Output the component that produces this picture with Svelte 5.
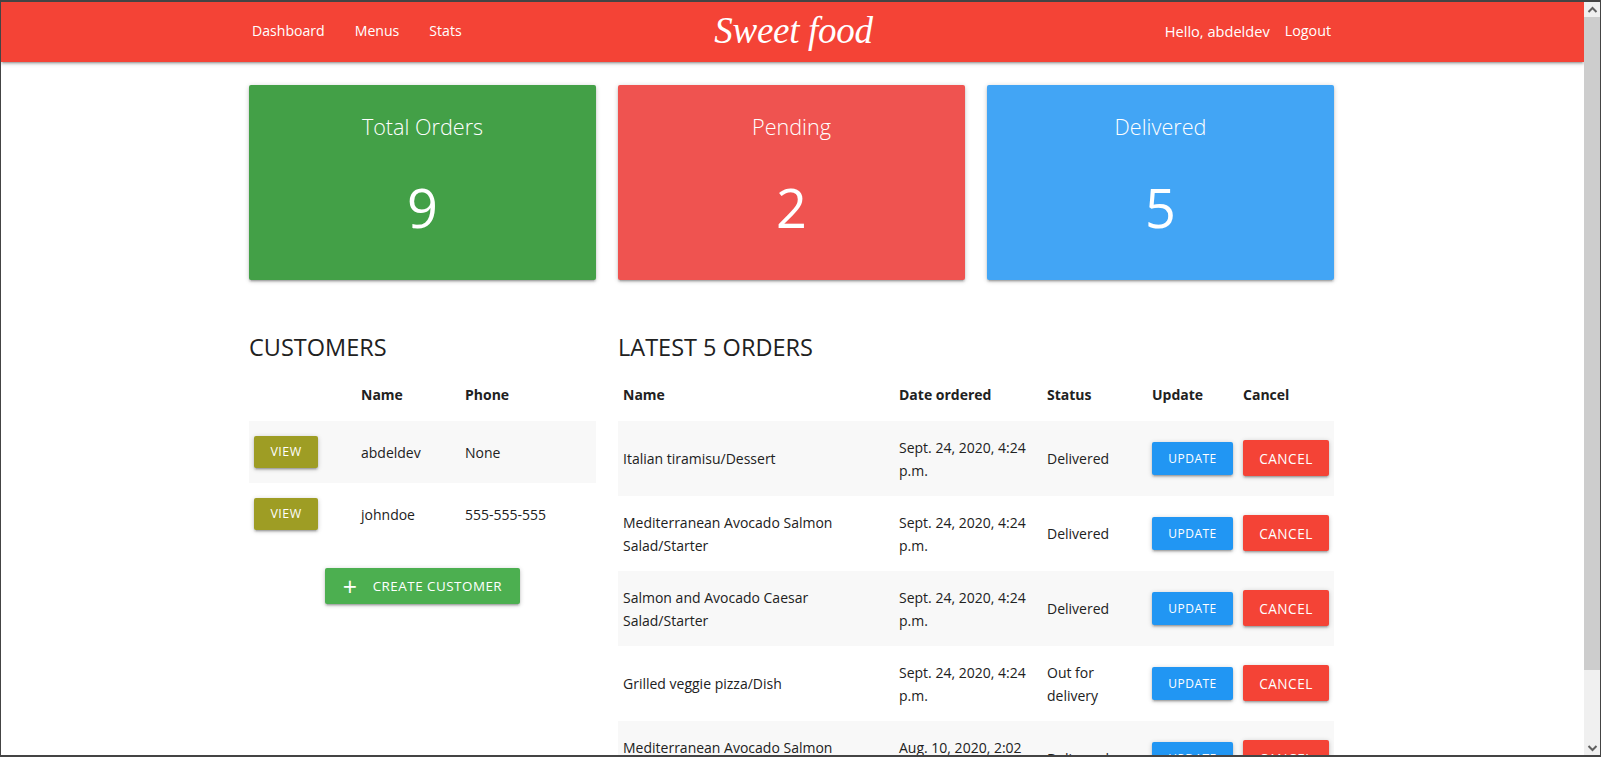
<script>
  const customers = [
    { name: 'abdeldev', phone: 'None' },
    { name: 'johndoe', phone: '555-555-555' }
  ];
  const orders = [
    { name: 'Italian tiramisu/Dessert', date: 'Sept. 24, 2020, 4:24 p.m.', status: 'Delivered' },
    { name: 'Mediterranean Avocado Salmon Salad/Starter', date: 'Sept. 24, 2020, 4:24 p.m.', status: 'Delivered' },
    { name: 'Salmon and Avocado Caesar Salad/Starter', date: 'Sept. 24, 2020, 4:24 p.m.', status: 'Delivered' },
    { name: 'Grilled veggie pizza/Dish', date: 'Sept. 24, 2020, 4:24 p.m.', status: 'Out for delivery' },
    { name: 'Mediterranean Avocado Salmon Salad/Starter', date: 'Aug. 10, 2020, 2:02 p.m.', status: 'Delivered' }
  ];
  const stats = [
    { title: 'Total Orders', value: 9, color: 'green' },
    { title: 'Pending', value: 2, color: 'red' },
    { title: 'Delivered', value: 5, color: 'blue' }
  ];
</script>

<div class="window">
  <div class="page">
    <nav>
      <div class="nav-inner">
        <ul class="links">
          <li>Dashboard</li>
          <li>Menus</li>
          <li>Stats</li>
        </ul>
        <div class="logo">Sweet food</div>
        <ul class="user">
          <li class="hello">Hello, abdeldev</li>
          <li>Logout</li>
        </ul>
      </div>
    </nav>

    <main>
      <section class="cards">
        {#each stats as s}
          <div class="card {s.color}">
            <h3>{s.title}</h3>
            <div class="num">{s.value}</div>
          </div>
        {/each}
      </section>

      <section class="lower">
        <div>
          <h2>CUSTOMERS</h2>
          <table class="cust">
            <colgroup><col style="width:107px" /><col style="width:104px" /><col /></colgroup>
            <thead>
              <tr><th></th><th>Name</th><th>Phone</th></tr>
            </thead>
            <tbody>
              {#each customers as c}
                <tr>
                  <td class="action"><button class="btn view">VIEW</button></td>
                  <td>{c.name}</td>
                  <td>{c.phone}</td>
                </tr>
              {/each}
            </tbody>
          </table>
          <div class="create-wrap">
            <button class="btn create"><span class="plus">+</span>CREATE CUSTOMER</button>
          </div>
        </div>

        <div>
          <h2>LATEST 5 ORDERS</h2>
          <table class="ord">
            <colgroup>
              <col style="width:276px" /><col style="width:148px" /><col style="width:105px" /><col style="width:91px" /><col />
            </colgroup>
            <thead>
              <tr><th>Name</th><th>Date ordered</th><th>Status</th><th>Update</th><th>Cancel</th></tr>
            </thead>
            <tbody>
              {#each orders as o}
                <tr>
                  <td>{o.name}</td>
                  <td>{o.date}</td>
                  <td>{o.status}</td>
                  <td class="action"><button class="btn update">UPDATE</button></td>
                  <td class="action"><button class="btn cancel">CANCEL</button></td>
                </tr>
              {/each}
            </tbody>
          </table>
        </div>
      </section>
    </main>
  </div>

  <div class="scrollbar">
    <div class="arrow">
      <svg width="11" height="8" viewBox="0 0 11 8"><path d="M1.5 6 L5.5 2 L9.5 6" fill="none" stroke="#606060" stroke-width="2" /></svg>
    </div>
    <div class="track"><div class="thumb"></div></div>
    <div class="arrow">
      <svg width="11" height="8" viewBox="0 0 11 8"><path d="M1.5 2 L5.5 6 L9.5 2" fill="none" stroke="#606060" stroke-width="2" /></svg>
    </div>
  </div>
</div>

<style>
  :global(body) {
    margin: 0;
    overflow: hidden;
    background: #fff;
  }

  .window {
    box-sizing: border-box;
    display: flex;
    height: 757px;
    border: 1px solid #444;
    border-top-width: 2px;
    border-bottom-width: 2px;
    font-family: "Open Sans", "Noto Sans", sans-serif;
    font-size: 14px;
    line-height: 22.5px;
    color: #212121;
    overflow: hidden;
  }

  .page {
    flex: 1;
    min-width: 0;
    overflow: hidden;
  }

  /* nav */
  nav {
    height: 60px;
    background: #f44336;
    box-shadow: 0 2px 2px 0 rgba(0, 0, 0, .14), 0 3px 1px -2px rgba(0, 0, 0, .12), 0 1px 5px 0 rgba(0, 0, 0, .2);
    color: #fff;
  }
  .nav-inner {
    box-sizing: border-box;
    width: 1085px;
    height: 100%;
    margin-left: 248px;
    padding-bottom: 2px;
    display: grid;
    grid-template-columns: 1fr auto 1fr;
    align-items: center;
  }
  ul {
    list-style: none;
    margin: 0;
    padding: 0;
    display: flex;
  }
  .links {
    gap: 30px;
    padding-left: 3px;
    font-size: 14.1px;
  }
  .user {
    gap: 15px;
    justify-content: flex-end;
    padding-right: 3px;
    font-size: 14.3px;
  }
  .hello {
    font-size: 14.6px;
  }
  .logo {
    margin-left: 4px;
    font-family: "Liberation Serif", serif;
    font-style: italic;
    font-size: 37px;
    line-height: 50px;
    letter-spacing: -.3px;
  }

  /* stat cards */
  main {
    width: 1085px;
    margin-left: 248px;
  }
  .cards {
    display: grid;
    grid-template-columns: repeat(3, 1fr);
    gap: 22px;
    padding-top: 23px;
  }
  .card {
    height: 195px;
    border-radius: 2px;
    color: #fff;
    text-align: center;
    box-shadow: 0 2px 2px 0 rgba(0, 0, 0, .14), 0 3px 1px -2px rgba(0, 0, 0, .12), 0 1px 5px 0 rgba(0, 0, 0, .2);
  }
  .card h3 {
    margin: 0;
    padding-top: 24px;
    font-size: 21.6px;
    font-weight: 300;
    line-height: 36px;
  }
  .card .num {
    margin-top: 24px;
    font-size: 54px;
    font-weight: 400;
    line-height: 76px;
  }
  .green { background: #43a047; }
  .red { background: #ef5350; }
  .blue { background: #42a5f5; }

  /* tables */
  .lower {
    display: grid;
    grid-template-columns: 347px 1fr;
    gap: 22px;
    padding-top: 48px;
  }
  h2 {
    margin: 0 0 2px;
    font-size: 23.5px;
    font-weight: 400;
    line-height: 38px;
    color: #212121;
  }
  table {
    width: 100%;
    table-layout: fixed;
    border-collapse: collapse;
  }
  th {
    padding: 16px 5px 14px;
    text-align: left;
    font-weight: 700;
  }
  td {
    padding: 15px 5px 14px;
    line-height: 23px;
    vertical-align: middle;
  }
  td.action {
    padding: 15px 5px;
  }
  tbody tr:nth-child(odd) {
    background: #f8f8f8;
  }
  .create-wrap {
    display: flex;
    justify-content: center;
    padding-top: 23px;
  }

  .btn {
    border: 0;
    border-radius: 2px;
    color: #fff;
    font-family: inherit;
    letter-spacing: .5px;
    display: inline-block;
    vertical-align: middle;
    box-shadow: 0 2px 2px 0 rgba(0, 0, 0, .14), 0 3px 1px -2px rgba(0, 0, 0, .12), 0 1px 5px 0 rgba(0, 0, 0, .2);
  }
  .view {
    width: 64px;
    height: 32px;
    padding: 0;
    background: #9e9d24;
    font-size: 12.4px;
  }
  .update {
    width: 81px;
    height: 33px;
    padding: 0;
    background: #2196f3;
    font-size: 12px;
  }
  .cancel {
    width: 86px;
    height: 36px;
    padding: 0;
    background: #f44336;
    font-size: 13.6px;
  }
  .create {
    width: 195px;
    height: 36px;
    padding: 0;
    background: #4caf50;
    font-size: 13.4px;
    display: flex;
    align-items: center;
    justify-content: center;
  }
  .plus {
    font-size: 25px;
    font-weight: 400;
    margin-right: 15px;
  }

  /* fake window scrollbar */
  .scrollbar {
    width: 16px;
    flex: none;
    background: #f0f0f0;
    display: flex;
    flex-direction: column;
  }
  .arrow {
    height: 15px;
    flex: none;
    display: flex;
    align-items: center;
    justify-content: center;
  }
  .track {
    flex: 1;
  }
  .thumb {
    height: 653px;
    background: #cdcdcd;
  }
</style>
